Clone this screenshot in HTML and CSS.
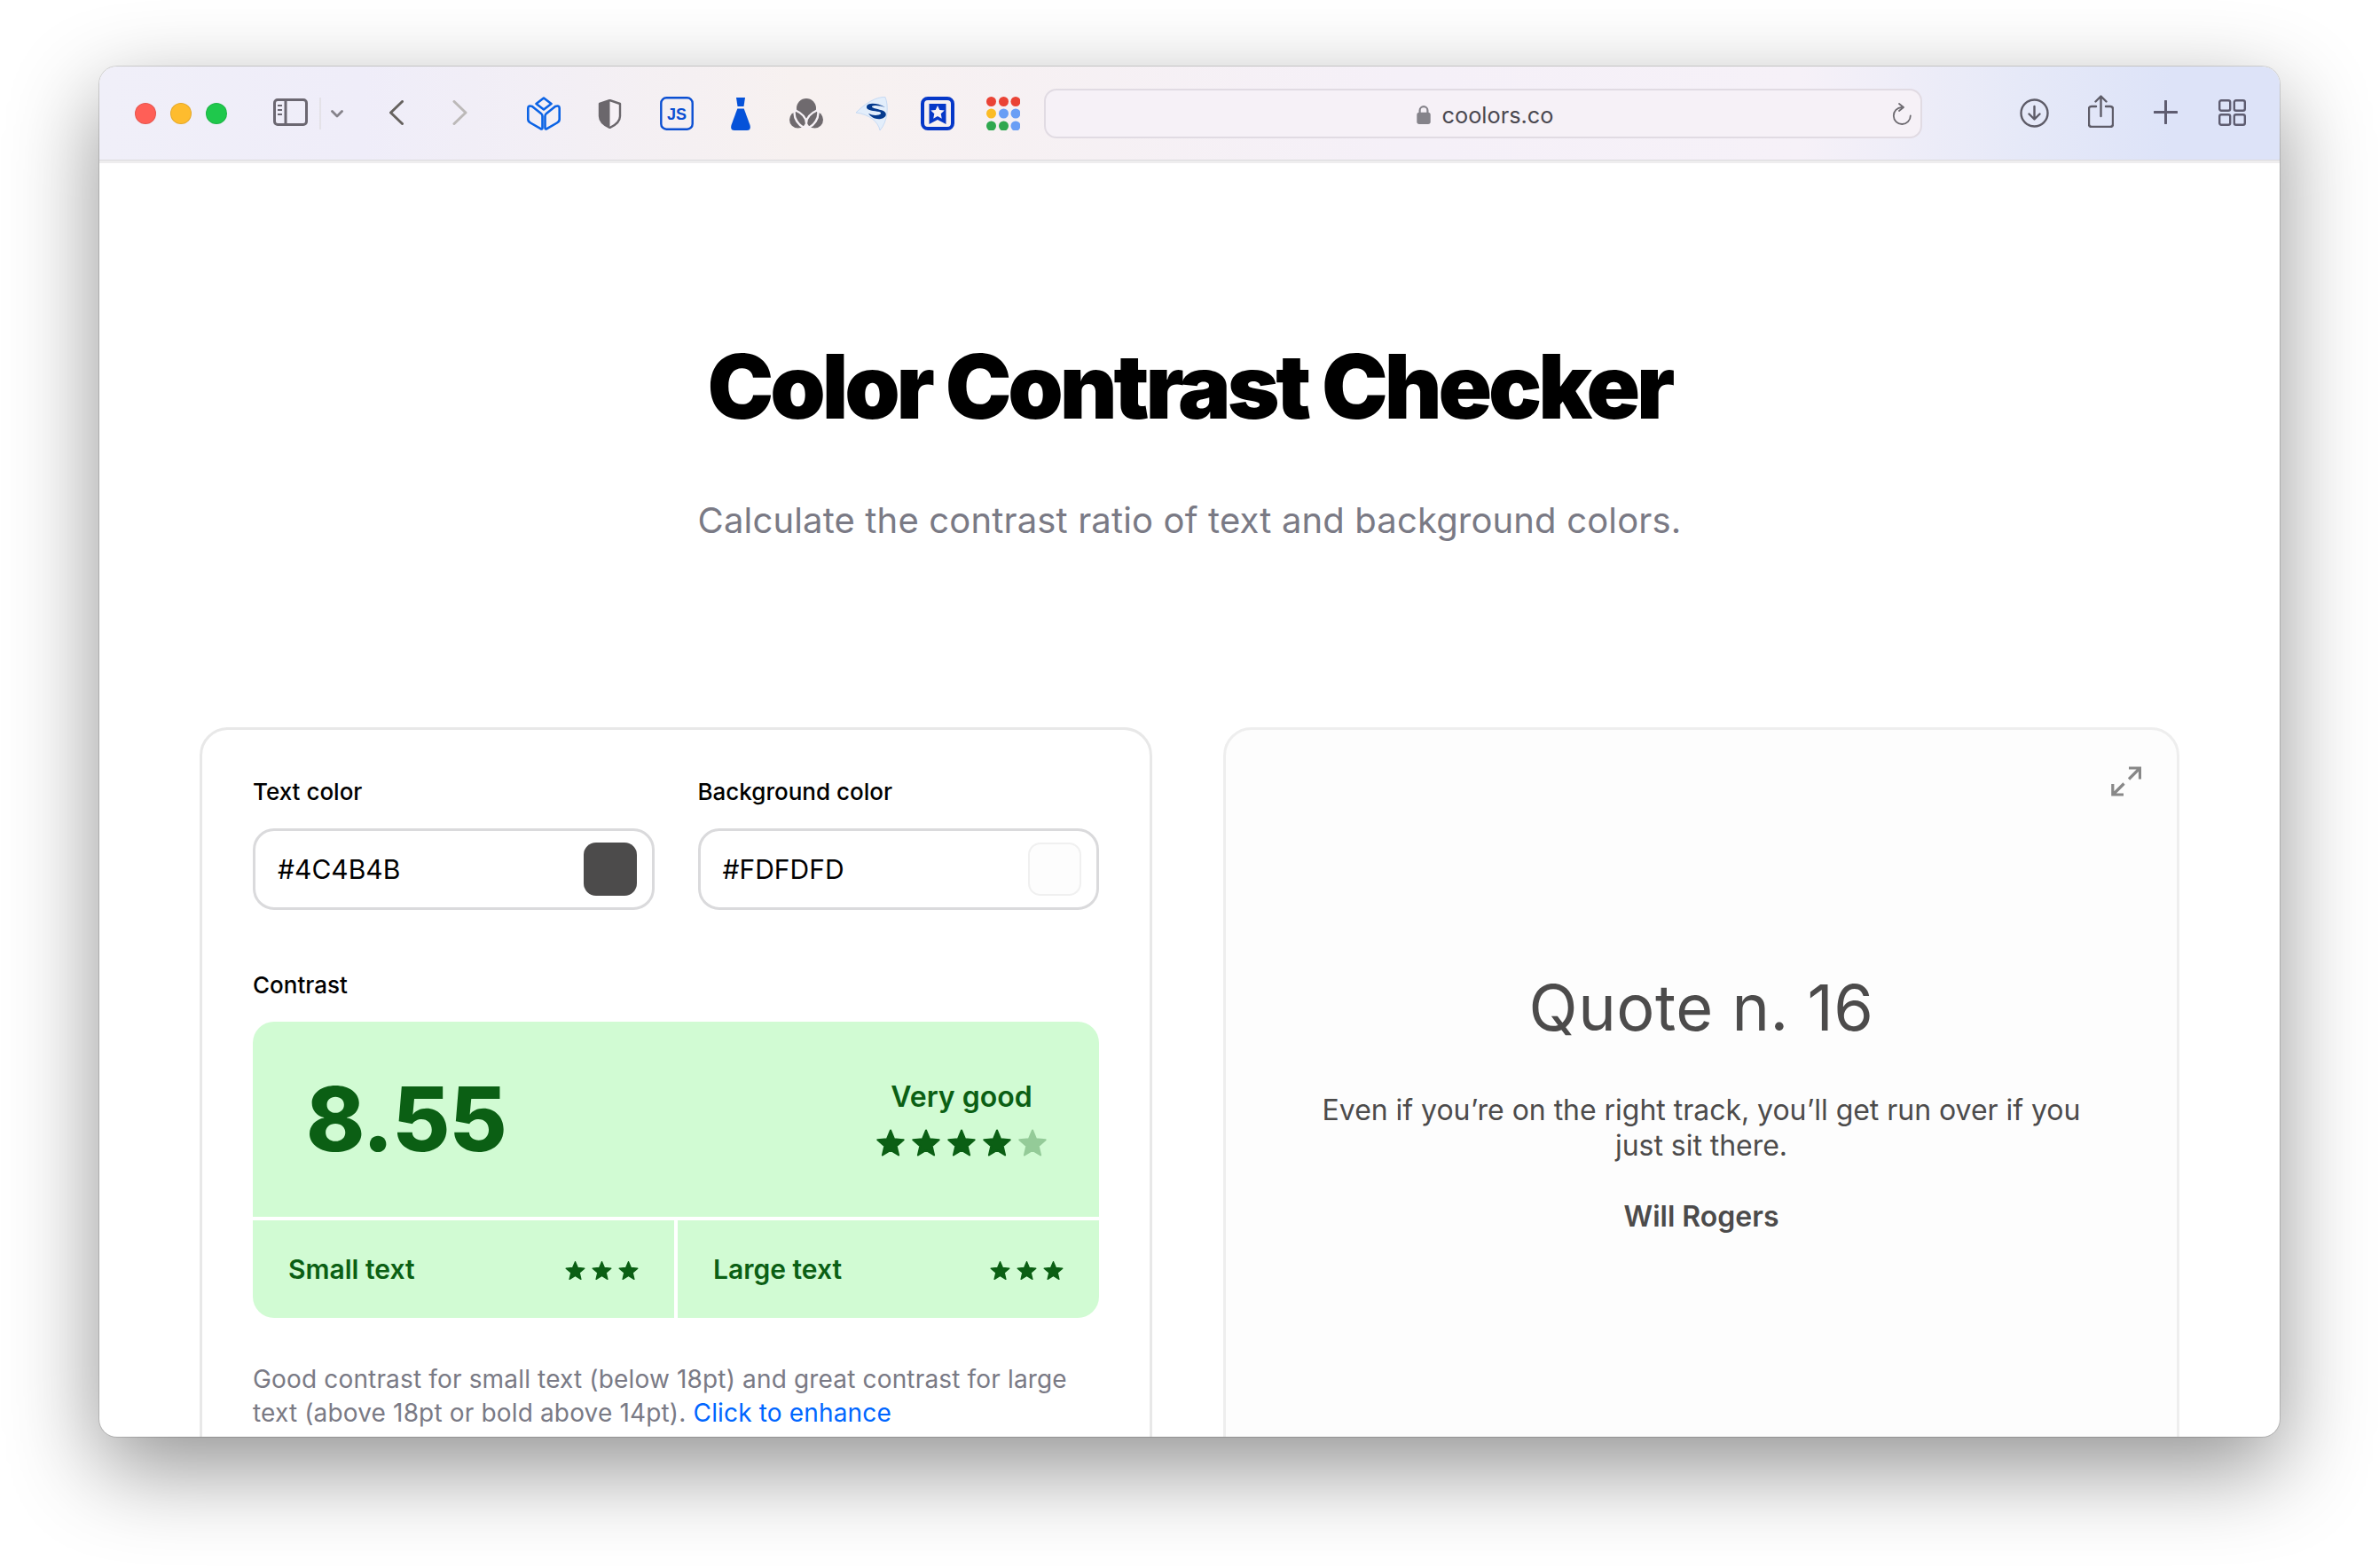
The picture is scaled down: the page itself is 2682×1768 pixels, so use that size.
FILE: index.html
```html
<!DOCTYPE html>
<html lang="en">
<head>
<meta charset="utf-8">
<title>Color Contrast Checker</title>
<link rel="stylesheet" href="styles.css">
</head>
<body>
<svg class="defs" width="0" height="0"><defs><symbol id="star" viewBox="0 0 32 30"><path d="M16 1l4.100 9.800 10.600.9-8 7 2.400 10.300-9.100-5.500-9.100 5.500 2.400-10.300-8-7 10.600-.9z"/></symbol></defs></svg>
<div class="window">
  <header class="toolbar">
    <div class="lights"><span class="light red"></span><span class="light yellow"></span><span class="light green"></span></div>
    <svg class="i-sidebar" viewBox="0 0 39 31" fill="none" stroke="#6b6771" stroke-width="3"><rect x="1.500" y="1.500" width="36" height="28" rx="3.500"/><path d="M14 2v27"/><path d="M5 8h5M5 13h5M5 18h5" stroke-width="2.200"/></svg>
    <span class="divider"></span>
    <svg class="i-caret" viewBox="0 0 14 9" fill="none" stroke="#85828a" stroke-width="2.800" stroke-linecap="round" stroke-linejoin="round"><path d="M1.500 1.500L7 7l5.500-5.500"/></svg>
    <svg class="i-back" viewBox="0 0 16 28" fill="none" stroke="#66625f" stroke-width="3" stroke-linecap="round" stroke-linejoin="round"><path d="M14.500 1.500L1.500 14l13 12.500"/></svg>
    <svg class="i-forward" viewBox="0 0 17 28" fill="none" stroke="#bcb9b8" stroke-width="3" stroke-linecap="round" stroke-linejoin="round"><path d="M2 1.500L15 14 2 26.500"/></svg>
    <svg class="i-cube" viewBox="0 0 38 38" fill="none" stroke="#0b63e5" stroke-width="2.600" stroke-linejoin="round"><path d="M19 1.500l8.500 6.500-8.500 6.500L10.500 8z"/><path d="M6 11L16 19q1.500 1 1.500 3v13q0 2-2 1.200L4 29.500q-2.700-1.500-2.700-4V13q0-3.500 4.700-2z"/><path d="M32 11L22 19q-1.500 1-1.500 3v13q0 2 2 1.200L34 29.500q2.700-1.500 2.700-4V13q0-3.500-4.700-2z"/></svg>
    <svg class="i-shield" viewBox="0 0 27 33"><path d="M13.500 1L25 5v14c0 6-6 10.500-11.500 13C8 29.500 2 25 2 19V5z" fill="#f6f1f6" stroke="#6b676c" stroke-width="2.400" stroke-linejoin="round"/><path d="M13.500 1L2 5v14c0 6 6 10.500 11.500 13z" fill="#6b676c"/></svg>
    <svg class="i-js" viewBox="0 0 38 38"><rect x="1.300" y="1.300" width="35.400" height="35.400" rx="6" fill="none" stroke="#0b4fd2" stroke-width="2.400"/><text class="js-text" x="19" y="26" text-anchor="middle">JS</text></svg>
    <svg class="i-flask" viewBox="0 0 22 37" fill="#0552d9"><path d="M6 0h10l-1.500 10h-7z"/><path d="M7.300 12.500h7.400L21.500 31q1.500 6-3.500 6H4q-5 0-3.500-6z"/></svg>
    <svg class="i-petals" viewBox="0 0 38 34"><circle cx="19" cy="11" r="11" fill="#6f6a6e"/><circle cx="9.500" cy="24" r="9.500" fill="#6f6a6e"/><circle cx="28.500" cy="24" r="9.500" fill="#6f6a6e"/><path d="M19 34V28C19 22 15 17 6 13C4 22 10 31 19 34C28 31 34 22 32 13C23 17 19 22 19 28" fill="none" stroke="#f6f1f6" stroke-width="2.400"/></svg>
    <svg class="i-s" viewBox="0 0 37 38"><path d="M0 18C10 8 22 0 33 .5c4 9.500 3 27.500-6 37.500-2-10-12-18-27-20z" fill="#e3eefb" stroke="#bcd4f2" stroke-width=".8"/><path d="M33 12C25 7 13 6 12 11c-1 5 9 5 14 6 4 1 2 4-4 4-3 0-5-1-8-2 3 4 8 7 14 6 6-1 8-6 3-9-5-2-14-3-13-5 2-2 10-1 15 1z" fill="#053a8e"/></svg>
    <svg class="i-mark" viewBox="0 0 38 38"><rect x="2" y="2" width="34" height="34" rx="6" fill="none" stroke="#0638c8" stroke-width="4"/><path d="M9.500 8h19v23l-9.500-5-9.500 5z" fill="#0638c8"/><path d="M19 10l2.300 5 5.400.6-4 3.700 1.100 5.400L19 22l-4.800 2.700 1.100-5.400-4-3.700 5.400-.6z" fill="#f6f1f6"/></svg>
    <svg class="i-dots" viewBox="0 0 38 38"><circle cx="5.500" cy="5.500" r="5.500" fill="#ea4335"/><circle cx="19.500" cy="5.500" r="5.500" fill="#ea4335"/><circle cx="33" cy="5.500" r="5.500" fill="#ea4335"/><circle cx="5.500" cy="19" r="5.500" fill="#fbbc25"/><circle cx="19.500" cy="19" r="5.500" fill="#6a9ef5"/><circle cx="33" cy="19" r="5.500" fill="#6a9ef5"/><circle cx="5.500" cy="33" r="5.500" fill="#2fa84f"/><circle cx="19.500" cy="33" r="5.500" fill="#2fa84f"/><circle cx="33" cy="33" r="5.500" fill="#6a9ef5"/></svg>
    <div class="address">
      <svg class="i-lock" viewBox="0 0 16 20"><path d="M4 9V6a4 4 0 018 0v3" fill="none" stroke="#85838a" stroke-width="2"/><rect x="1" y="8" width="14" height="12" rx="2.500" fill="#85838a"/></svg>
      <span class="url">coolors.co</span>
      <svg class="i-reload" viewBox="0 0 22 25" fill="none" stroke="#6d6a70" stroke-width="1.800" stroke-linecap="round" stroke-linejoin="round"><path d="M11 5a9.500 9.500 0 109.800 9.500"/><path d="M8 1l5 4-5 4"/></svg>
    </div>
    <svg class="i-download" viewBox="0 0 33 33" fill="none" stroke="#5e5c68" stroke-width="2.400" stroke-linecap="round" stroke-linejoin="round"><circle cx="16.500" cy="16.500" r="15"/><path d="M16.500 9v14M10.500 17.500l6 6 6-6"/></svg>
    <svg class="i-share" viewBox="0 0 29 37" fill="none" stroke="#5e5c68" stroke-width="2.400" stroke-linecap="round" stroke-linejoin="round"><path d="M9 13H4q-3 0-3 3v17q0 3 3 3h21q3 0 3-3V16q0-3-3-3h-5"/><path d="M14.500 24V2M8.500 7.500l6-6 6 6"/></svg>
    <svg class="i-plus" viewBox="0 0 27 27" fill="none" stroke="#5e5c70" stroke-width="3" stroke-linecap="round"><path d="M13.500 1v25M1 13.500h25"/></svg>
    <svg class="i-grid" viewBox="0 0 31 30" fill="none" stroke="#5e5c70" stroke-width="2.400"><rect x="1.200" y="1.200" width="12" height="11.500" rx="2"/><rect x="17.800" y="1.200" width="12" height="11.500" rx="2"/><rect x="1.200" y="17.300" width="12" height="11.500" rx="2"/><rect x="17.800" y="17.300" width="12" height="11.500" rx="2"/></svg>
  </header>
  <main class="page">
    <h1 class="title">Color Contrast Checker</h1>
    <p class="subtitle">Calculate the contrast ratio of text and background colors.</p>
    <div class="cards">
      <section class="card card-left">
        <div class="fields">
          <div class="field">
            <div class="label">Text color</div>
            <div class="input"><span class="hex">#4C4B4B</span><span class="swatch swatch-dark"></span></div>
          </div>
          <div class="field">
            <div class="label">Background color</div>
            <div class="input"><span class="hex">#FDFDFD</span><span class="swatch swatch-light"></span></div>
          </div>
        </div>
        <div class="label label-contrast">Contrast</div>
        <div class="score">
          <div class="score-top">
            <div class="ratio">8.55</div>
            <div class="rating">
              <div class="rating-text">Very good</div>
              <div class="stars stars-big">
                <svg><use href="#star"/></svg><svg><use href="#star"/></svg><svg><use href="#star"/></svg><svg><use href="#star"/></svg><svg class="star-off"><use href="#star"/></svg>
              </div>
            </div>
          </div>
          <div class="score-bottom">
            <div class="cell cell-left"><span>Small text</span><div class="stars stars-small"><svg><use href="#star"/></svg><svg><use href="#star"/></svg><svg><use href="#star"/></svg></div></div>
            <div class="cell cell-right"><span>Large text</span><div class="stars stars-small"><svg><use href="#star"/></svg><svg><use href="#star"/></svg><svg><use href="#star"/></svg></div></div>
          </div>
        </div>
        <p class="note">Good contrast for small text (below 18pt) and great contrast for large text (above 18pt or bold above 14pt). <a class="link">Click to enhance</a></p>
      </section>
      <section class="card card-right">
        <svg class="i-expand" viewBox="0 0 34 34" fill="none" stroke="#888" stroke-width="3.200"><path d="M20 2h12.500v12.500M32 2.500L20 14.500M14 32H1.800V20M2.500 31.500L14.500 19.500"/></svg>
        <h2 class="quote-title">Quote n. 16</h2>
        <p class="quote-text">Even if you’re on the right track, you’ll get run over if you just sit there.</p>
        <p class="quote-author">Will Rogers</p>
      </section>
    </div>
  </main>
</div>
</body>
</html>
```

FILE: styles.css
```css
* { box-sizing: border-box; }
html, body { margin: 0; height: 100%; }
body {
  background: #fff;
  padding: 75px 112px 148px;
  font-family: Inter, "Liberation Sans", sans-serif;
  overflow: hidden;
}
.defs { position: absolute; }
.window {
  height: 1545px;
  border-radius: 20px;
  overflow: hidden;
  background: #fff;
  display: flex;
  flex-direction: column;
  box-shadow: 0 0 0 1px rgba(0,0,0,.14), 0 35px 100px rgba(0,0,0,.43);
}
.toolbar {
  flex: none;
  height: 109px;
  display: flex;
  align-items: center;
  padding: 0 0 0 40px;
  background: linear-gradient(90deg, #f0eff9 0%, #efedf9 12%, #f7f1f0 32%, #f5f0f8 60%, #f6f1f8 78%, #e6e9f8 88%, #dde3f8 95%, #dde3f8 100%);
  border-bottom: 3px solid #eeedee;
  box-shadow: inset 0 -1px 0 #dcdbdd;
  position: relative;
}
.lights { display: flex; gap: 16px; flex: none; }
.light { width: 24px; height: 24px; border-radius: 50%; border: 1px solid rgba(0,0,0,.1); }
.red { background: #ff5f57; }
.yellow { background: #febc2e; }
.green { background: #1fc84c; }
.toolbar svg { flex: none; display: block; }
.i-sidebar { width: 39px; height: 31px; margin: 0 0 3px 52px; }
.divider { flex: none; width: 2px; height: 36px; background: #e4e2e8; margin-left: 13px; }
.i-caret { width: 14px; height: 9px; margin-left: 11px; }
.i-back { width: 16px; height: 28px; margin: 0 0 2px 52px; }
.i-forward { width: 17px; height: 28px; margin: 0 0 2px 55px; }
.i-cube { width: 38px; height: 38px; margin-left: 67px; }
.i-shield { width: 27px; height: 33px; margin-left: 42px; }
.i-js { width: 38px; height: 38px; margin-left: 43px; }
.js-text { font: 700 18px "Liberation Sans", sans-serif; fill: #0b4fd2; }
.i-flask { width: 22px; height: 37px; margin-left: 42px; }
.i-petals { width: 38px; height: 34px; margin-left: 44px; }
.i-s { width: 37px; height: 38px; margin-left: 37px; }
.i-mark { width: 38px; height: 38px; margin-left: 36px; }
.i-dots { width: 38px; height: 38px; margin-left: 36px; }
.address {
  flex: none;
  width: 990px;
  height: 56px;
  margin-left: 27px;
  border: 2px solid #e1dbe3;
  border-radius: 14px;
  background: #f6f1f7;
  display: flex;
  align-items: center;
  justify-content: center;
  gap: 12px;
  position: relative;
  color: #4a4850;
  font-size: 25.300px;
  padding-left: 3px;
}
.toolbar .i-lock { width: 18px; height: 22px; margin-top: 2px; }
.url { line-height: 1; padding-top: 4px; }
.toolbar .i-reload { position: absolute; right: 10px; top: 14px; width: 22px; height: 25px; }
.i-download { width: 33px; height: 33px; margin: 0 0 2px 110px; }
.i-share { width: 29px; height: 37px; margin: 0 0 5px 44px; }
.i-plus { width: 27px; height: 27px; margin: 0 0 3px 45px; }
.i-grid { width: 31px; height: 30px; margin: 0 0 2px 46px; }

.page { flex: 1; min-height: 0; padding: 194px 113px 0; overflow: hidden; }
.title {
  margin: 0;
  text-align: center;
  font-size: 100px;
  line-height: 116px;
  font-weight: 900;
  letter-spacing: -4.100px;
  color: #000;
}
.subtitle {
  margin: 63px 0 0;
  text-align: center;
  font-size: 40px;
  line-height: 60px;
  letter-spacing: .15px;
  color: #7a7a85;
}
.cards {
  display: grid;
  grid-template-columns: 1074px 1fr;
  gap: 80px;
  margin-top: 203px;
}
.card { border: 3px solid #e8e8e8; border-radius: 32px; background: #fff; }
.card-left { padding: 52px 57px 60px; }
.card-right { background: #fdfdfd; border-color: #eee; text-align: center; padding: 0 100px; position: relative; }
.fields { display: grid; grid-template-columns: 1fr 1fr; gap: 49px; }
.label { font-size: 26px; line-height: 36px; font-weight: 500; color: #000; }
.input {
  margin-top: 23px;
  height: 92px;
  border: 3px solid #dadadc;
  border-radius: 24px;
  display: flex;
  align-items: center;
  justify-content: space-between;
  padding: 0 17px 0 25px;
}
.hex { font-size: 30px; color: #000; }
.swatch { width: 60px; height: 60px; border-radius: 14px; }
.swatch-dark { background: #4c4b4b; }
.swatch-light { background: #fdfdfd; border: 2px solid #f0f0f0; }
.label-contrast { margin-top: 67px; }
.score { margin-top: 23px; color: #0b5f14; border-radius: 24px; overflow: hidden; }
.score-top {
  height: 220px;
  background: #d1fbd3;
  display: flex;
  justify-content: space-between;
  align-items: center;
  padding: 0 59px 0 60px;
}
.ratio { font-size: 100px; font-weight: 800; line-height: 1; letter-spacing: -1px; }
.rating { display: flex; flex-direction: column; align-items: center; gap: 16px; margin-bottom: 3px; }
.rating-text { font-size: 32px; font-weight: 600; line-height: 40px; }
.stars { display: flex; }
.stars svg { display: block; fill: #0b5f14; stroke: #0b5f14; stroke-width: 2; stroke-linejoin: round; }
.stars-big { gap: 8px; }
.stars-big svg { width: 32px; height: 31px; }
.stars-big .star-off { opacity: .3; }
.stars-small { gap: 7px; margin-top: 3px; }
.stars-small svg { width: 23px; height: 21px; }
.score-bottom { display: grid; grid-template-columns: 1fr 1fr; gap: 4px; margin-top: 4px; }
.cell {
  height: 110px;
  background: #d1fbd3;
  display: flex;
  align-items: center;
  justify-content: space-between;
  padding: 0 40px;
  font-size: 30px;
  font-weight: 600;
}
.note { margin: 50px 0 0; font-size: 28px; line-height: 38px; letter-spacing: .16px; color: #7a7a85; }
.link { color: #0066ff; }
.i-expand { position: absolute; top: 41px; right: 40px; width: 34px; height: 34px; }
.quote-title { margin: 268px 0 0; font-size: 72px; line-height: 90px; font-weight: 400; letter-spacing: .5px; color: #4c4b4b; }
.quote-text { margin: 51px 0 0; font-size: 32px; line-height: 40px; letter-spacing: -.03px; color: #4c4b4b; }
.quote-author { margin: 40px 0 0; font-size: 32px; line-height: 40px; font-weight: 600; color: #4c4b4b; }
```
